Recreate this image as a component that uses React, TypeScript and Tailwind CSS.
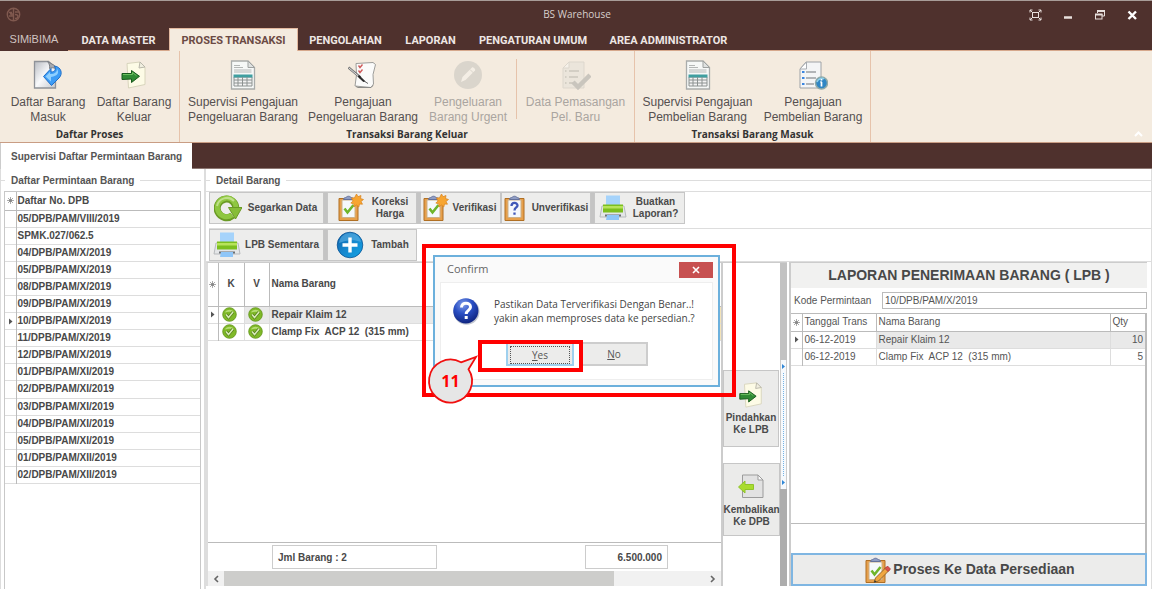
import type { ReactNode } from "react";

const sans = "font-['Liberation_Sans',Arial,sans-serif]";
const segoe = "font-['Open_Sans','Noto_Sans',sans-serif]";
const menuFont = "font-['Roboto','Noto_Sans',sans-serif]";

/* ---------- icons ---------- */

function AppLogo() {
  return (
    <svg width="15" height="15" viewBox="0 0 15 15" fill="none" stroke="#80594f" strokeWidth="1.4">
      <circle cx="7.5" cy="7.5" r="6.2" />
      <path d="M7.5 1v13M3 5.5h3M3 9h3v-2H4M9 5h4M9 7.5c2 0 3 .5 3 2s-1 2-3 2" />
    </svg>
  );
}

function DocBack() {
  return (
    <svg width="30" height="30" viewBox="0 0 30 30">
      <defs>
        <linearGradient id="docback" x1="0" y1="0" x2="1" y2="1">
          <stop offset="0" stopColor="#b9bcc2" />
          <stop offset=".5" stopColor="#f8f9fb" />
          <stop offset="1" stopColor="#c4c7cc" />
        </linearGradient>
      </defs>
      <path d="M1.500 1.500h14l7 6v20.500h-21z" fill="url(#docback)" stroke="#8f9298" strokeWidth="1.300" />
      <path d="M14.500 1.500c2 2 2.500 5 2 7 2-1 4-1 6 0l-1-3z" fill="#a8abb0" stroke="#7c7f84" />
      <path d="M10.500 16.500l7.500-8v3.500c4 0 5.500-2.500 3.500-6 7 1 8.500 8 4.500 12l-7.500 7.500z" fill="#3d9cf5" stroke="#1f6fc9" />
      <path d="M12.500 16.500l4.500-4.500v2c4 .3 7-1.500 7-5 2.500 3.500 1 7-6 8v4.500z" fill="#8fd0ff" />
    </svg>
  );
}

function PageArrow({ size = 30 }: { size?: number }) {
  return (
    <svg width={size} height={size} viewBox="0 0 30 30">
      <path d="M8 3.500l13-1.500 5 5v17.500L9.500 28z" fill="#fdfbe6" stroke="#d8d5bd" />
      <path d="M21 2l-1 6 6-1z" fill="#f1efe0" stroke="#b9b7aa" />
      <path d="M3 13.500h9.500V10.500l8 5.800-8 6.200v-3.500L3 19.500z" fill="#2f8a34" stroke="#17591c" />
      <path d="M4 14.500h9.500v-2l4 3.200" fill="none" stroke="#6cbf5f" />
    </svg>
  );
}

function PageArrowBack() {
  return (
    <svg width="30" height="30" viewBox="0 0 30 30">
      <path d="M5.500 4h15.500l5 5v17.500H5.500z" fill="#e2e2e2" stroke="#9b9b9b" />
      <path d="M21 4v5h5z" fill="#fafafa" stroke="#9b9b9b" />
      <path d="M1.500 16L8 10v3.500h8.500v5H8V22z" fill="#a9dc2f" stroke="#8fc42a" />
    </svg>
  );
}

function SheetTable() {
  return (
    <svg width="30" height="30" viewBox="0 0 30 30">
      <path d="M3.500 1h16.500l6.500 6.500V29h-23z" fill="#f6f8f7" stroke="#a9acab" strokeWidth="1.300" />
      <path d="M20 1v6.500h6.500z" fill="#dfe2e1" stroke="#9fa2a1" />
      <path d="M6 5.500h6M6 7.500h9M6 10h17.500M6 12h17.500" stroke="#b4b7b6" />
      <path d="M6 17h18v9H6z" fill="#f3f3f3" stroke="#8c9291" />
      <path d="M5.500 14.500h19v3h-19z" fill="#3f9fa0" />
      <path d="M10 17v9M14.500 17v9M19 17v9M6 20h18M6 23h18" stroke="#8c9291" />
    </svg>
  );
}

function NotePen() {
  return (
    <svg width="30" height="30" viewBox="0 0 30 30">
      <path d="M8 3.500l17-1 2.500 2-2.500 10 .5 9.500-2.500 3.500-16-1.500 1.500-11z" fill="#fbfbfa" stroke="#9d9d9a" />
      <path d="M8 26.500l2 1h13l2-2" fill="none" stroke="#8a8a87" />
      <path d="M10.500 5.500l1.500 2 2.500-3M10.500 10.500l1.500 2 2.500-3" fill="none" stroke="#cf5a5a" strokeWidth="1.400" />
      <path d="M.500 7.500l12 10" stroke="#777" strokeWidth="2.400" />
      <path d="M1 8l10 8.500" stroke="#ddd" />
      <path d="M11 15.500l6 6-2-.3-4.500-4.200z" fill="#222" stroke="#222" />
      <path d="M16 21l4 2.500" stroke="#666" />
    </svg>
  );
}

function PencilDisc() {
  return (
    <svg width="30" height="30" viewBox="0 0 30 30">
      <circle cx="15" cy="15" r="14" fill="#dad5cc" />
      <path d="M8 22l1.500-5L19 7.500c1-1 4 2 3 3L12.500 20z" fill="#f4eee5" />
      <path d="M17 9.500l3.500 3.500" stroke="#dad5cc" />
    </svg>
  );
}

function DocCheckDisabled() {
  return (
    <svg width="30" height="30" viewBox="0 0 30 30">
      <path d="M8 2h15v26H2V8z" fill="#ebe5db" stroke="#ddd7cd" />
      <path d="M8 2v6H2z" fill="#f6f1e9" stroke="#ddd7cd" />
      <path d="M8 11h10M8 17h9M8 23h4M4 11h1.500M4 17h1.500M4 23h1.500" stroke="#cbc6bd" strokeWidth="1.500" />
      <path d="M12 22l5 5L29 15" fill="none" stroke="#c9c5bd" strokeWidth="4.500" />
    </svg>
  );
}

function DocInfo() {
  return (
    <svg width="30" height="30" viewBox="0 0 30 30">
      <path d="M8 2h15v26H2V9z" fill="#f4f5f6" stroke="#9ea2a6" />
      <path d="M8.500 2v7H2z" fill="#fff" stroke="#a9adb1" />
      <path d="M8 12h10M8 18h10M8 24h8" stroke="#9b9fa3" strokeWidth="1.400" />
      <path d="M4 12h2.500M4 18h2.500M4 24h2.500" stroke="#3b86e0" strokeWidth="2.200" />
      <circle cx="23.500" cy="23" r="6" fill="#2f86c4" stroke="#8fa9a8" strokeWidth="1.500" />
      <path d="M19 22c1-3 5-4.500 7-3" stroke="#8fd0ea" fill="none" strokeWidth="1.500" />
      <path d="M23.500 22v4.500M22.300 22h1.500M23.500 19v1.500" stroke="#fff" strokeWidth="1.700" />
    </svg>
  );
}

function RefreshIcon() {
  return (
    <svg width="28" height="28" viewBox="0 0 28 28">
      <path d="M18.500 21.500A9.300 9.300 0 1 1 21.800 15" fill="none" stroke="#6a9a25" strokeWidth="7" />
      <path d="M18 21A9.300 9.300 0 1 1 21.800 15" fill="none" stroke="#8fc741" strokeWidth="5" />
      <path d="M3 12A10 10 0 0 1 20 7" fill="none" stroke="#bfe08a" strokeWidth="2" />
      <path d="M14.500 13.500H28L21.500 25z" fill="#86bd38" stroke="#6a9a25" />
    </svg>
  );
}

function PrinterIcon() {
  return (
    <svg width="28" height="28" viewBox="0 0 28 28">
      <path d="M3 12h22l2 11H1z" fill="#e4e6e8" stroke="#b7babd" />
      <path d="M7 1.500h14v10H7z" fill="#a5d3fb" />
      <path d="M4 10.500h20v8H4z" fill="#7cbf1e" />
      <path d="M4 12h20v2.500H4z" fill="#b7e35a" />
      <path d="M6 20.500h16v2H6z" fill="#6b6f73" />
      <path d="M8 21h12v5H7z" fill="#8fc6f8" />
    </svg>
  );
}

function PlusIcon() {
  return (
    <svg width="28" height="28" viewBox="0 0 28 28">
      <defs>
        <linearGradient id="plusdisc" x1="0" y1="0" x2="1" y2="1">
          <stop offset="0" stopColor="#0d5ea8" />
          <stop offset=".5" stopColor="#1787cd" />
          <stop offset="1" stopColor="#10a4e6" />
        </linearGradient>
      </defs>
      <circle cx="14" cy="14" r="12.800" fill="url(#plusdisc)" stroke="#0b5496" strokeWidth=".8" />
      <path d="M3 12C4 5 9 2 14 2s10 3 11 9c-7-3-15-2-22 1z" fill="#5fb4e6" opacity=".6" />
      <path d="M14 6.500v15M6.500 14h15" stroke="#fff" strokeWidth="3.400" />
    </svg>
  );
}

function Clipboard({ kind }: { kind: "check" | "question" | "pencil" }) {
  return (
    <svg width="28" height="28" viewBox="0 0 28 28">
      <path d="M3 4.500h19v22H3z" fill="#e7a04c" stroke="#b06f23" />
      <path d="M6 6h13v17.500H6z" fill="#f5f8fc" stroke="#cdb28a" />
      <path d="M7.500 5.500c0-2 2-1.500 3-2.500s3-1 4 0 3 .5 3 2.500z" fill="#8f9dc4" stroke="#64719b" />
      {kind === "question" ? (
        <path d="M9.500 12c0-4 6-4 6-.5 0 2-3 2-3 5M12.500 18.500v2.300" fill="none" stroke="#4058b8" strokeWidth="2.300" />
      ) : (
        <path d="M8.500 14.500l3 4 6-7.500" fill="none" stroke="#6fb52b" strokeWidth="2.600" />
      )}
      {kind === "check" && (
        <path d="M20.500 0l1.500 2.700 3-1.200-.5 3 3 1-2.500 2 1.500 2.700-3-.2-.7 3-2.300-2-2.500 1.800-.2-3-3-.7 2.200-2.200L15.500 4l3-.2z" fill="#f7a531" stroke="#d9811a" strokeWidth=".7" />
      )}
      {kind === "pencil" && (
        <g>
          <path d="M11 26.500l1.500-4.500L23.500 11l3 3L15.500 25z" fill="#f0a640" stroke="#9a6a2a" />
          <path d="M22 12.500l2.500-2.500 3 3-2.500 2.500z" fill="#d9534f" stroke="#a33" strokeWidth=".7" />
          <path d="M11 26.500l.8-2.500 1.700 1.700z" fill="#333" />
        </g>
      )}
    </svg>
  );
}

function OkDot() {
  return (
    <svg className="ml-[3px] block" width="15" height="15" viewBox="0 0 15 15">
      <circle cx="7.500" cy="7.500" r="6.800" fill="#7fb928" stroke="#5f9317" strokeWidth=".8" />
      <path d="M3 5.500c1-3 7-4 9 0-3-1-6-1-9 0z" fill="#b5dd73" />
      <path d="M4 7.500l2.500 3L11 5" fill="none" stroke="#557f1b" strokeWidth="3" />
      <path d="M4 7.500l2.500 3L11 5" fill="none" stroke="#d9ecb8" strokeWidth="1.500" />
    </svg>
  );
}

function QuestionDisc() {
  return (
    <svg width="28" height="28" viewBox="0 0 28 28">
      <defs>
        <radialGradient id="qdisc" cx=".4" cy=".25" r=".8">
          <stop offset="0" stopColor="#7d9be8" />
          <stop offset=".45" stopColor="#2a4fc4" />
          <stop offset="1" stopColor="#0c1f78" />
        </radialGradient>
      </defs>
      <circle cx="14.500" cy="14.800" r="13" fill="#9aa0b0" opacity=".6" />
      <circle cx="13.800" cy="13.800" r="12.600" fill="url(#qdisc)" />
      <path d="M9.500 10.500c0-6 9-5.500 9-.5 0 3.500-4.300 3.300-4.300 7M14.200 19v3" fill="none" stroke="#fff" strokeWidth="3" />
    </svg>
  );
}

function StarMark() {
  return (
    <svg className="mx-auto block" width="7" height="7" viewBox="0 0 7 7" stroke="#aaa">
      <path d="M3.500 0v7M0 3.500h7M1 1l5 5M6 1L1 6" />
      <circle cx="3.500" cy="3.500" r="1.500" fill="#888" stroke="none" />
    </svg>
  );
}

function RowMark() {
  return (
    <svg className="mx-auto block" width="5" height="7" viewBox="0 0 5 7">
      <path d="M1 .5l3.500 3L1 6.500z" fill="#555" />
    </svg>
  );
}

/* ---------- ribbon ---------- */

function RibbonItem({ icon, a, b, width, disabled }: { icon: ReactNode; a: string; b: string; width: string; disabled?: boolean }) {
  return (
    <button
      disabled={disabled}
      className={`${width} flex flex-col items-center pt-[9px] text-[12px] leading-[15px] ${disabled ? "text-[#aaa5a0]" : "text-[#555050]"}`}
    >
      {icon}
      <span className="mt-[5px] whitespace-nowrap">{a}</span>
      <span className="whitespace-nowrap">{b}</span>
    </button>
  );
}

function RibbonGroup({ title, children }: { title: string; children: ReactNode }) {
  return (
    <section className="flex flex-col border-r border-[#e6c3ab]">
      <div className="flex">{children}</div>
      <h2 className={`${segoe} mt-[2px] text-center text-[10px] font-bold leading-[14px] text-[#333]`}>{title}</h2>
    </section>
  );
}

/* ---------- tool bar ---------- */

function Tool({ icon, box, children }: { icon: ReactNode; box: string; children: ReactNode }) {
  return (
    <button className={`${box} flex h-8 items-center border border-[#c6c6c6] bg-[#ededec] text-[10px] font-bold leading-[12px] text-[#4a4a4a]`}>
      <span className="shrink-0">{icon}</span>
      <span className="flex-1 whitespace-nowrap text-center">{children}</span>
    </button>
  );
}

function Divider() {
  return <span className="h-8 w-[3px] bg-[#c4c4c4]" />;
}

function Legend({ children }: { children: ReactNode }) {
  return (
    <div className="flex h-[22px] items-center gap-1 text-[10px] font-bold text-[#555]">
      <span className="h-px w-1 bg-[#ddd]" />
      <h2 className="px-[2px] text-[10px]">{children}</h2>
      <span className="h-px flex-1 bg-[#ddd]" />
    </div>
  );
}

const orders = [
  "05/DPB/PAM/VIII/2019",
  "SPMK.027/062.5",
  "04/DPB/PAM/X/2019",
  "05/DPB/PAM/X/2019",
  "08/DPB/PAM/X/2019",
  "09/DPB/PAM/X/2019",
  "10/DPB/PAM/X/2019",
  "11/DPB/PAM/X/2019",
  "12/DPB/PAM/X/2019",
  "01/DPB/PAM/XI/2019",
  "02/DPB/PAM/XI/2019",
  "03/DPB/PAM/XI/2019",
  "04/DPB/PAM/XI/2019",
  "05/DPB/PAM/XI/2019",
  "01/DPB/PAM/XII/2019",
  "02/DPB/PAM/XII/2019",
];

const items = [
  { name: "Repair Klaim 12", date: "06-12-2019", qty: 10 },
  { name: "Clamp Fix  ACP 12  (315 mm)", date: "06-12-2019", qty: 5 },
];

const menuAfter = [
  { label: "PENGOLAHAN", width: "w-[95px]" },
  { label: "LAPORAN", width: "w-[75px]" },
  { label: "PENGATURAN UMUM", width: "w-[130px]" },
  { label: "AREA ADMINISTRATOR", width: "w-[141px]" },
];

function Header() {
  return (
    <header className="bg-[#4f312d]">
      <div className="flex h-7 items-center border-t border-[#a89c98] pl-[6px] pr-[14px]">
        <AppLogo />
        <h1 className={`${segoe} flex-1 pl-[104px] text-center text-[10px] text-[#d8cfcc]`}>BS Warehouse</h1>
        <div className="flex items-center gap-[21px] text-[#e8e0dd]">
          <button aria-label="Full screen">
            <svg className="block" width="13" height="12" viewBox="0 0 13 12" fill="none" stroke="currentColor">
              <rect x="3.500" y="3.500" width="6" height="5" />
              <path d="M1 3.500V1h2.500M9.500 1H12v2.500M12 8.500V11H9.500M3.500 11H1V8.500M1 1l2.500 2.500M12 1L9.500 3.500M12 11L9.500 8.500M1 11l2.500-2.500" />
            </svg>
          </button>
          <button aria-label="Minimize">
            <svg className="block" width="10" height="12" viewBox="0 0 10 12">
              <path d="M1 8.500h8" stroke="currentColor" strokeWidth="2.500" />
            </svg>
          </button>
          <button aria-label="Restore">
            <svg className="block" width="11" height="12" viewBox="0 0 11 12" fill="none" stroke="currentColor">
              <path d="M3.500 4V2.500h7v4.500H8" />
              <path d="M3 2h8" strokeWidth="2" />
              <rect x="1.500" y="5.500" width="6.500" height="4.500" />
              <path d="M1 5.500h7.500" strokeWidth="2" />
            </svg>
          </button>
          <button aria-label="Close">
            <svg className="block" width="12" height="12" viewBox="0 0 12 12">
              <path d="M2.500 2.500l7.500 7.500M10 2.500L2.500 10" stroke="#fff" strokeWidth="2.400" />
            </svg>
          </button>
        </div>
      </div>

      <nav className={`${menuFont} flex h-[23px] whitespace-nowrap text-[11px] font-bold text-[#eee7e4]`}>
        <button className={`${sans} w-[68px] font-normal text-[#cfc4c1]`}>SIMiBIMA</button>
        <button className="w-[101px] border-b border-[#d6a88c] pt-[4px]">DATA MASTER</button>
        <button className="w-[129px] border-x border-t border-[#e3b9a0] bg-[#f4ebdf] pt-[3px] text-[#6b4a44]">PROSES TRANSAKSI</button>
        {menuAfter.map((m) => (
          <button key={m.label} className={`${m.width} border-b border-[#d6a88c] pt-[4px]`}>{m.label}</button>
        ))}
        <span className="flex-1 border-b border-[#d6a88c]" />
      </nav>

      <div className="flex h-[92px] border-b border-[#c99d84] bg-[#f4ebdf]">
        <RibbonGroup title="Daftar Proses">
          <span className="w-[5px]" />
          <RibbonItem width="w-[86px]" icon={<DocBack />} a="Daftar Barang" b="Masuk" />
          <RibbonItem width="w-[86px]" icon={<PageArrow />} a="Daftar Barang" b="Keluar" />
          <span className="w-[2px]" />
        </RibbonGroup>
        <RibbonGroup title="Transaksi Barang Keluar">
          <RibbonItem width="w-[126px]" icon={<SheetTable />} a="Supervisi Pengajuan" b="Pengeluaran Barang" />
          <RibbonItem width="w-[114px]" icon={<NotePen />} a="Pengajuan" b="Pengeluaran Barang" />
          <RibbonItem width="w-[96px]" icon={<PencilDisc />} a="Pengeluaran" b="Barang Urgent" disabled />
          <span className="mt-2 h-[60px] w-px bg-[#e6c3ab]" />
          <RibbonItem width="w-[117px]" icon={<DocCheckDisabled />} a="Data Pemasangan" b="Pel. Baru" disabled />
        </RibbonGroup>
        <RibbonGroup title="Transaksi Barang Masuk">
          <RibbonItem width="w-[125px]" icon={<SheetTable />} a="Supervisi Pengajuan" b="Pembelian Barang" />
          <RibbonItem width="w-[106px]" icon={<DocInfo />} a="Pengajuan" b="Pembelian Barang" />
          <span className="w-1" />
        </RibbonGroup>
        <div className="flex flex-1 items-end justify-end pb-[5px] pr-[9px]">
          <button aria-label="Collapse ribbon">
            <svg className="block" width="9" height="6" viewBox="0 0 9 6">
              <path d="M1 5l3.500-3.500L8 5" fill="none" stroke="#fff" strokeWidth="2" />
            </svg>
          </button>
        </div>
      </div>

      <div className="flex h-[26px] border-b border-[#8d7873]">
        <button className="h-[26px] border-l border-[#ccc] bg-white px-[10px] text-[10px] font-bold text-[#555]">Supervisi Daftar Permintaan Barang</button>
      </div>
    </header>
  );
}

function OrderList() {
  return (
    <section className="flex w-[206px] flex-col border-l border-r-2 border-[#ddd] pr-[3px]">
      <Legend>Daftar Permintaan Barang</Legend>
      <div className="ml-[3px] flex-1 border-x border-t border-[#c8c8c8]">
        <table className="h-[292px] w-full border-collapse text-left text-[10px] font-bold leading-[12px] text-[#484848]">
          <thead>
            <tr className="h-[18px] border-b border-[#bbb]">
              <th className="w-[11px] border-r border-[#bbb] p-0"><StarMark /></th>
              <th className="px-px py-0">Daftar No. DPB</th>
            </tr>
          </thead>
          <tbody>
            {orders.map((o) => (
              <tr key={o} className="h-[17px] border-b border-[#ddd]">
                <td className="border-r border-[#bbb] p-0">{o.startsWith("10/") && <RowMark />}</td>
                <td className="px-px py-0">{o}</td>
              </tr>
            ))}
          </tbody>
        </table>
      </div>
    </section>
  );
}

function DetailGrid() {
  return (
    <div className="flex min-w-0 flex-1 flex-col border-x-2 border-t border-[#ccc] border-l-[#ddd]">
      <div className="flex-1">
        <table className="w-full table-fixed border-collapse text-left text-[10px] font-bold leading-[12px] text-[#484848]">
          <thead>
            <tr className="h-[43px] border-b border-[#bbb]">
              <th className="w-[10px] border-r border-[#bbb] p-0"><StarMark /></th>
              <th className="w-[26px] border-r border-[#bbb] p-0 text-center">K</th>
              <th className="w-[25px] border-r border-[#bbb] p-0 text-center">V</th>
              <th className="px-[2px] py-0">Nama Barang</th>
              <th className="w-[3px] border-l border-[#bbb] p-0" />
            </tr>
          </thead>
          <tbody>
            {items.map((it, i) => (
              <tr key={it.name} className="h-[17px] border-b border-[#ddd]">
                <td className="border-r border-[#bbb] p-0">{i === 0 && <RowMark />}</td>
                <td className="border-r border-[#ddd] p-0"><OkDot /></td>
                <td className={`border-r border-[#ddd] p-0 ${i === 0 ? "bg-[#e9e9e9]" : ""}`}><OkDot /></td>
                <td className={`whitespace-pre px-[2px] py-0 ${i === 0 ? "bg-[#e9e9e9]" : ""}`}>{it.name}</td>
                <td className="border-l border-[#999] bg-[#f3e3b8] p-0" />
              </tr>
            ))}
          </tbody>
        </table>
      </div>
      <div className="flex h-[29px] items-start border-t border-[#bbb] pl-[64px] pr-[53px] pt-[2px] text-[10px] font-bold text-[#484848]">
        <output className="flex h-6 w-[165px] items-center border border-[#ccc] px-[5px]">Jml Barang : 2</output>
        <span className="flex-1" />
        <output className="flex h-6 w-[83px] items-center justify-end border border-[#ccc] px-[5px]">6.500.000</output>
      </div>
      <div className="flex h-[15px] items-center bg-[#f1f1f1]">
        <button aria-label="Scroll left" className="flex w-4 justify-center">
          <svg width="6" height="8" viewBox="0 0 6 8"><path d="M5 1L2 4l3 3" fill="none" stroke="#666" strokeWidth="1.600" /></svg>
        </button>
        <div className="flex h-full flex-1">
          <span className="h-full w-[81%] bg-[#cdcdcb]" />
        </div>
        <button aria-label="Scroll right" className="flex w-4 justify-center">
          <svg width="6" height="8" viewBox="0 0 6 8"><path d="M1 1l3 3-3 3" fill="none" stroke="#666" strokeWidth="1.600" /></svg>
        </button>
      </div>
    </div>
  );
}

function MoveButton({ icon, a, b, size }: { icon: ReactNode; a: string; b: string; size: string }) {
  return (
    <button className={`${size} flex flex-col items-center justify-center border border-[#c6c6c6] bg-[#ebebea] text-[10px] font-bold leading-[12px] text-[#4a4a4a]`}>
      {icon}
      <span className="mt-[3px] whitespace-nowrap">{a}</span>
      <span>{b}</span>
    </button>
  );
}

function ReceiptPanel() {
  return (
    <section className="mr-1 flex w-[358px] flex-col border-l-2 border-t border-[#ccc] text-[10px] text-[#555]">
      <h2 className="h-[25px] bg-[#f1f1f0] text-center text-[14px] font-bold leading-[25px] text-[#484848]">LAPORAN PENERIMAAN BARANG ( LPB )</h2>
      <div className="flex items-center pb-1 pl-[3px] pt-1">
        <label htmlFor="kode" className="w-[88px]">Kode Permintaan</label>
        <input id="kode" defaultValue="10/DPB/PAM/X/2019" className="h-[17px] min-w-0 flex-1 border border-[#bbb] bg-white px-[2px] text-[10px]" />
      </div>
      <div className="flex-1 border-r-2 border-t border-[#bbb]">
        <table className="w-full table-fixed border-collapse text-left font-normal leading-[12px]">
          <thead>
            <tr className="h-[17px] border-b border-[#bbb]">
              <th className="w-[11px] border-r border-[#bbb] p-0"><StarMark /></th>
              <th className="w-[74px] whitespace-nowrap border-r border-[#bbb] px-[2px] py-0 font-normal">Tanggal Trans</th>
              <th className="border-r border-[#bbb] px-[2px] py-0 font-normal">Nama Barang</th>
              <th className="w-[35px] px-[2px] py-0 font-normal">Qty</th>
            </tr>
          </thead>
          <tbody>
            {items.map((it, i) => (
              <tr key={it.name} className="h-[17px] border-b border-[#ddd]">
                <td className="border-r border-[#bbb] p-0">{i === 0 && <RowMark />}</td>
                <td className="border-r border-[#ddd] px-[2px] py-0">{it.date}</td>
                <td className={`whitespace-pre border-r border-[#ddd] px-[2px] py-0 ${i === 0 ? "bg-[#e9e9e9]" : ""}`}>{it.name}</td>
                <td className={`px-[2px] py-0 text-right ${i === 0 ? "bg-[#e9e9e9]" : ""}`}>{it.qty}</td>
              </tr>
            ))}
          </tbody>
        </table>
      </div>
      <div className="h-[30px] border-r-2 border-t border-[#bbb]" />
      <button className="flex h-[33px] items-center justify-center gap-[2px] border-2 border-[#7fb6e2] bg-[#ececeb] text-[14px] font-bold text-[#484848]">
        <Clipboard kind="pencil" />
        Proses Ke Data Persediaan
      </button>
    </section>
  );
}

function ConfirmDialog() {
  return (
    <div className="absolute left-[422px] top-[244px] h-[153px] w-[314px] border-4 border-[#ff0000] p-[7px]">
      <div role="dialog" aria-label="Confirm" className={`${segoe} flex h-[132px] w-[287px] flex-col border-2 border-[#6cb0dc] bg-[#fafafa] px-[5px] pb-[5px]`}>
        <div className="flex h-[25px] items-center justify-between pl-[7px]">
          <span className="text-[11px] text-[#666]">Confirm</span>
          <button aria-label="Close dialog" className="flex h-4 w-[34px] items-center justify-center bg-[#c75050]">
            <svg width="8" height="8" viewBox="0 0 8 8"><path d="M1 1l6 6M7 1L1 7" stroke="#fff" strokeWidth="1.600" /></svg>
          </button>
        </div>
        <div className="flex-1 border border-[#eee] bg-white">
          <div className="flex gap-[14px] pl-[11px] pt-[14px]">
            <QuestionDisc />
            <p className="whitespace-nowrap text-[10px] leading-[14px] text-[#444]">
              Pastikan Data Terverifikasi Dengan Benar..!<br />
              yakin akan memproses data ke persedian.?
            </p>
          </div>
          <div className="mt-[17px] flex gap-[6px] pl-[65px] text-[10px] leading-[16px] text-[#555]">
            <button className="h-6 w-[68px] border-2 border-[#9fd0ee] bg-[#ececeb] p-[2px]">
              <span className="block border border-dotted border-[#555]"><u>Y</u>es</span>
            </button>
            <button className="h-6 w-[68px] border-2 border-[#cdcdcd] bg-[#ececeb]"><u>N</u>o</button>
          </div>
        </div>
      </div>
      <div className="pointer-events-none absolute left-[52px] top-[92px] h-8 w-[105px] border-4 border-[#ff0000]" />
      <svg className="absolute left-0 top-[106px]" width="56" height="54" viewBox="0 0 56 54">
        <path d="M35 8.300L50 3 42.500 15.300A21.500 21.500 0 1 1 35 8.300z" fill="#e6e6e6" stroke="#f01010" strokeWidth="1.800" />
        <text x="24.500" y="33" textAnchor="middle" fontFamily="Open Sans, sans-serif" fontWeight="700" fontSize="16" fill="#ff0000">11</text>
      </svg>
    </div>
  );
}

export default function App() {
  return (
    <div className={`${sans} relative flex min-h-screen flex-col bg-white`}>
      <Header />
      <main className="flex flex-1">
        <OrderList />
        <section className="flex min-w-0 flex-1 flex-col border-r border-[#ddd]">
          <Legend>Detail Barang</Legend>
          <div className="border-y border-[#ddd] pl-[3px]">
            <div className="flex">
              <Tool box="w-[115px] pl-1" icon={<RefreshIcon />}>Segarkan Data</Tool>
              <Divider />
              <Tool box="w-[90px] pl-2" icon={<Clipboard kind="check" />}>Koreksi<br />Harga</Tool>
              <Divider />
              <Tool box="w-[81px]" icon={<Clipboard kind="check" />}>Verifikasi</Tool>
              <Tool box="w-[90px]" icon={<Clipboard kind="question" />}>Unverifikasi</Tool>
              <Divider />
              <Tool box="w-[91px] pl-1" icon={<PrinterIcon />}>Buatkan<br />Laporan?</Tool>
            </div>
            <div className="mt-1 flex border-t border-[#ddd]">
              <Tool box="w-[115px] pl-[3px]" icon={<PrinterIcon />}>LPB Sementara</Tool>
              <Divider />
              <Tool box="w-[90px] pl-2" icon={<PlusIcon />}>Tambah</Tool>
            </div>
          </div>
          <div className="mb-[3px] flex flex-1">
            <DetailGrid />
            <div className="flex w-[57px] flex-col gap-4 border-t border-[#ccc] pt-[107px]">
              <MoveButton size="h-[77px] w-[56px]" icon={<PageArrow size={28} />} a="Pindahkan" b="Ke LPB" />
              <MoveButton size="h-[73px] w-[57px]" icon={<PageArrowBack />} a="Kembalikan" b="Ke DPB" />
            </div>
            <div className="flex w-[7px] flex-col border-t border-[#ccc]">
              <span className="h-[97px] bg-[#c2c2c2]" />
              <div className="flex h-[129px] flex-col items-center justify-between border-x border-[#ccc] bg-[#f6f9fc] py-1">
                <svg width="3" height="5" viewBox="0 0 3 5"><path d="M0 0l3 2.500L0 5z" fill="#2f86d6" /></svg>
                <span className="my-1 flex-1 border-l border-dotted border-[#74b3e6]" />
                <svg width="3" height="5" viewBox="0 0 3 5"><path d="M0 0l3 2.500L0 5z" fill="#2f86d6" /></svg>
              </div>
              <span className="flex-1 bg-[#adadad]" />
            </div>
            <span className="w-[2px]" />
            <ReceiptPanel />
          </div>
        </section>
      </main>
      <ConfirmDialog />
    </div>
  );
}
